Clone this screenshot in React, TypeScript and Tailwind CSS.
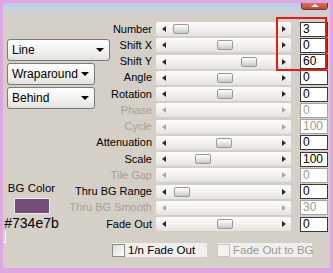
import React from 'react';

type Row = { label: string; value: string; thumb?: number; disabled?: boolean };

const rows: Row[] = [
  { label: 'Number', value: '3', thumb: 17 },
  { label: 'Shift X', value: '0', thumb: 61 },
  { label: 'Shift Y', value: '60', thumb: 85 },
  { label: 'Angle', value: '0', thumb: 61 },
  { label: 'Rotation', value: '0', thumb: 61 },
  { label: 'Phase', value: '0', disabled: true },
  { label: 'Cycle', value: '100', disabled: true },
  { label: 'Attenuation', value: '0', thumb: 60 },
  { label: 'Scale', value: '100', thumb: 39 },
  { label: 'Tile Gap', value: '0', disabled: true },
  { label: 'Thru BG Range', value: '0', thumb: 18 },
  { label: 'Thru BG Smooth', value: '30', disabled: true },
  { label: 'Fade Out', value: '0', thumb: 61 },
];

const Dropdown: React.FC<{ label: string; width: string }> = ({ label, width }) => (
  <div
    className={`${width} h-[22px] flex items-center justify-between pl-[4px] pr-[5px] rounded-[3px] border border-[#7a7a7a] bg-[linear-gradient(to_bottom,#ffffff,#f1f1ee_60%,#e2e1dc)] text-[12px] text-black`}
  >
    <span>{label}</span>
    <span className="w-0 h-0 border-x-[4px] border-x-transparent border-t-[4px] border-t-black" />
  </div>
);

const SliderRow: React.FC<{ row: Row }> = ({ row }) => {
  const arrow = row.disabled ? '#a8a6a0' : '#2a2a2a';
  return (
    <div className="flex items-center h-[16.25px]">
      <div
        className={`w-[92px] mr-[4px] text-right text-[11px] leading-none whitespace-nowrap ${
          row.disabled ? 'text-[#a4a09a]' : 'text-black'
        }`}
      >
        {row.label}
      </div>
      <div className="relative w-[135px] h-[14px] flex items-center justify-between pl-[6px] pr-[5px] rounded-[2px] bg-[linear-gradient(to_bottom,#fdfdfc,#f1f0ec_55%,#e4e3de)]">
        <span
          className="w-0 h-0 border-y-[3.5px] border-y-transparent border-r-[4px]"
          style={{ borderRightColor: arrow }}
        />
        <span
          className="w-0 h-0 border-y-[3.5px] border-y-transparent border-l-[4px]"
          style={{ borderLeftColor: arrow }}
        />
        {row.thumb !== undefined && (
          <div
            className="absolute top-[2px] w-[16px] h-[10px] rounded-[2px] border border-[#9a9a98] bg-[linear-gradient(to_bottom,#ffffff,#e6e6e4_50%,#c9c9c6)]"
            style={{ left: row.thumb }}
          />
        )}
      </div>
      <div
        className={`ml-[9px] w-[28px] h-[15px] bg-white border pl-[2px] text-[12px] leading-[13px] ${
          row.disabled ? 'border-[#a4a29c] text-[#9c9a94]' : 'border-[#3a3a3a] text-black'
        }`}
      >
        {row.value}
      </div>
    </div>
  );
};

const Check: React.FC<{ label: string; disabled?: boolean }> = ({ label, disabled }) => (
  <div className="w-[95px] h-[14px] flex items-center gap-[3px] bg-[#f0efec]">
    <span
      className={`shrink-0 w-[13px] h-[13px] border ${
        disabled
          ? 'border-[#c8c6c0] bg-[#f4f3f0]'
          : 'border-[#8a8a88] bg-[linear-gradient(135deg,#dcdcd8,#ffffff)]'
      }`}
    />
    <span
      className={`text-[11.5px] leading-none whitespace-nowrap ${
        disabled ? 'text-[#9c9a94]' : 'text-black'
      }`}
    >
      {label}
    </span>
  </div>
);

export default function App() {
  return (
    <div className="relative w-[333px] h-[273px] overflow-hidden border-[3px] border-b-[5px] border-[#e0a6e4] bg-[linear-gradient(to_bottom,#b8cce4_0px,#c4d2e2_5px,#d4d0c8_13px,#d4d0c8)] font-['Liberation_Sans',Arial,sans-serif]">
      {/* collapse button */}
      <div className="absolute -top-[3px] left-[298px] w-[27px] h-[10px] rounded-b-[3px] border border-[#8a2a1a] bg-[linear-gradient(to_bottom,#e0806a,#c04a34)] flex items-center justify-center">
        <span className="w-0 h-0 border-x-[4px] border-x-transparent border-b-[3px] border-b-white" />
      </div>

      <div className="flex">
        {/* left controls */}
        <div className="w-[57px] shrink-0 pt-[36px] flex flex-col">
          <div className="pl-[4px] flex flex-col gap-[2px]">
            <Dropdown label="Line" width="w-[103px]" />
            <Dropdown label="Wraparound" width="w-[88px]" />
            <Dropdown label="Behind" width="w-[88px]" />
          </div>
          <div className="mt-[73px] flex flex-col items-center">
            <div className="text-[11.5px] leading-[12px] text-black">BG Color</div>
            <div className="mt-[4px] w-[36px] h-[16px] bg-[#734e7b] border border-[#ecebe8]" />
            <div className="mt-[1px] text-[14px] leading-[16px] text-black">#734e7b</div>
          </div>
          <div className="ml-[0px] w-[3px] h-[12px] border-r border-b border-white" />
        </div>

        {/* sliders */}
        <div className="pt-[18px] flex flex-col">
          {rows.map((r) => (
            <SliderRow key={r.label} row={r} />
          ))}
          <div className="mt-[11px] pl-[52px] flex gap-[10px]">
            <Check label="1/n Fade Out" />
            <Check label="Fade Out to BG" disabled />
          </div>
        </div>
      </div>

      {/* highlight box */}
      <div className="absolute left-[273px] top-[14px] w-[51px] h-[54px] border-2 border-[#e01c1c]" />
    </div>
  );
}
